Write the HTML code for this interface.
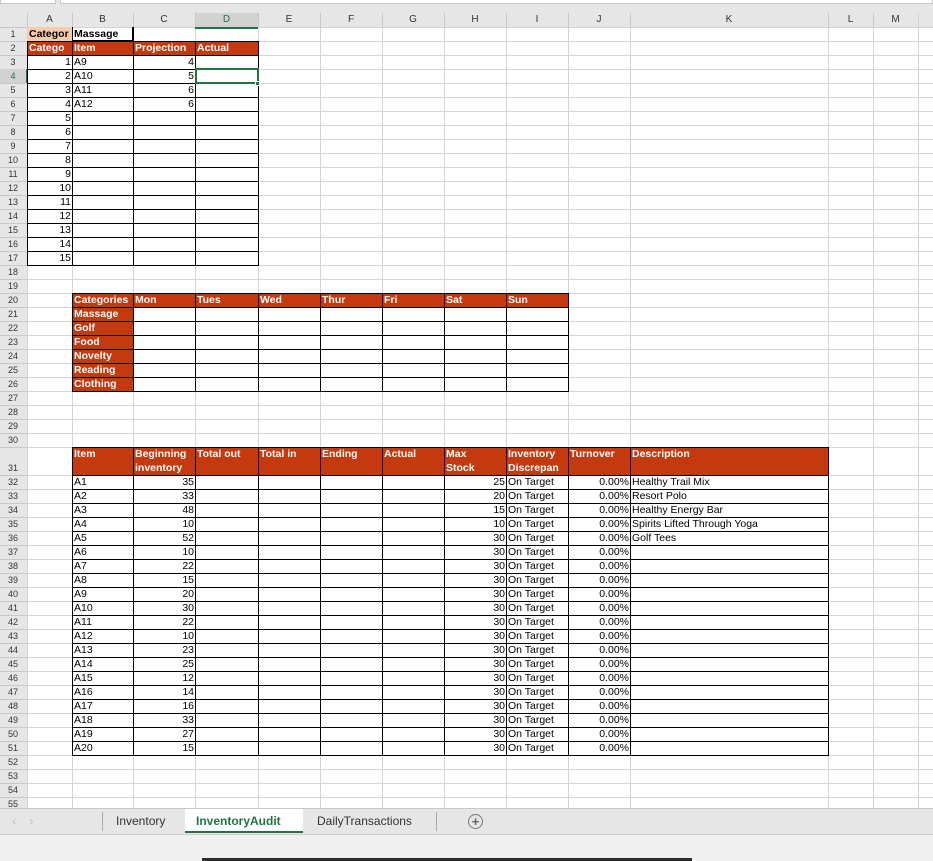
<!DOCTYPE html>
<html><head><meta charset="utf-8"><style>
body{margin:0;width:933px;height:861px;overflow:hidden;background:#fff;font-family:"Liberation Sans",Arial,sans-serif;position:relative}
.a{position:absolute;box-sizing:border-box}
.t{position:absolute;font-size:10.5px;line-height:14px;white-space:nowrap;overflow:hidden;padding:0 2px;box-sizing:border-box;color:#000}
.b{font-weight:bold;color:#fff}
.r{text-align:right}
</style></head><body>
<div class="a" style="left:0;top:0;width:933px;height:27px;background:#e6e6e6"></div>
<div class="a" style="left:0;top:0;width:56px;height:4px;background:#fff;border:1px solid #c8c8c8;border-top:none"></div>
<div class="a" style="left:60px;top:0;width:873px;height:4px;background:#fff;border:1px solid #c8c8c8;border-top:none"></div>
<div id="g"></div>
<script>
var X=[27,72,133,195,258,320,382,444,506,568,630,828,873,918,933];
var L="ABCDEFGHIJKLM";
function rowTop(n){if(n<=31)return 27+14*(n-1);return 475+14*(n-32);}
function rowH(n){return n==31?28:14;}
var h='';
for(var i=0;i<X.length;i++)h+='<div class="a" style="left:'+X[i]+'px;top:13px;width:1px;height:798px;background:#d4d4d4"></div>';
for(var n=1;n<=55;n++){var y=rowTop(n);h+='<div class="a" style="left:0;top:'+y+'px;width:933px;height:1px;background:#d4d4d4"></div>';}
h+='<div class="a" style="left:0;top:27px;width:27px;height:784px;background:#e6e6e6"></div>';
for(var n=1;n<=55;n++){var y=rowTop(n);h+='<div class="a" style="left:0;top:'+y+'px;width:27px;height:1px;background:#c8c8c8"></div>';
h+='<div class="t" style="left:0;top:'+(y+rowH(n)-14)+'px;width:26px;font-size:9px;text-align:center;color:#333;'+(n==4?'color:#217346;background:#d2d2d2;':'')+'">'+n+'</div>';}
h+='<div class="a" style="left:26px;top:69px;width:2px;height:14px;background:#217346"></div>';
for(var i=0;i<13;i++){var sel=i==3;h+='<div class="t" style="left:'+X[i]+'px;top:13px;width:'+(X[i+1]-X[i])+'px;text-align:center;font-size:10px;color:'+(sel?'#217346':'#333')+';'+(sel?'background:#d2d2d2;border-bottom:2px solid #217346;':'')+'">'+L[i]+'</div>';
h+='<div class="a" style="left:'+X[i]+'px;top:13px;width:1px;height:14px;background:#c8c8c8"></div>';}
var RED='#c4390e';
function fill(c,r,bg,c2,r2){c2=c2||c;r2=r2||r;h+='<div class="a" style="left:'+X[c]+'px;top:'+rowTop(r)+'px;width:'+(X[c2+1]-X[c])+'px;height:'+(rowTop(r2)+rowH(r2)-rowTop(r))+'px;background:'+bg+'"></div>';}
function box(c1,r1,c2,r2){for(var c=c1;c<=c2;c++)for(var r=r1;r<=r2;r++){h+='<div class="a" style="left:'+X[c]+'px;top:'+rowTop(r)+'px;width:'+(X[c+1]-X[c]+1)+'px;height:'+(rowH(r)+1)+'px;border:1px solid #000"></div>';}}
function txt(c,r,s,cls,extra){h+='<div class="t '+(cls||'')+'" style="left:'+X[c]+'px;top:'+rowTop(r)+'px;width:'+(X[c+1]-X[c]+1)+'px;'+(extra||'')+'">'+s+'</div>';}
fill(0,1,'#f8cbad');
fill(0,2,RED,3,2);
box(0,2,3,17);
h+='<div class="a" style="left:72px;top:27px;width:62px;height:15px;border:2px solid #000;border-left:1px solid #000;border-top:none"></div>';
txt(0,1,'Categor','', 'font-weight:bold');txt(1,1,'Massage','','font-weight:bold');
['Catego','Item','Projection','Actual'].forEach(function(s,i){txt(i,2,s,'b');});
for(var k=1;k<=15;k++)txt(0,k+2,k,'r');
['A9','A10','A11','A12'].forEach(function(s,i){txt(1,i+3,s);});
[4,5,6,6].forEach(function(s,i){txt(2,i+3,s,'r');});
fill(1,20,RED,8,20);fill(1,21,RED,1,26);
box(1,20,8,26);
['Categories','Mon','Tues','Wed','Thur','Fri','Sat','Sun'].forEach(function(s,i){txt(i+1,20,s,'b');});
['Massage','Golf','Food','Novelty','Reading','Clothing'].forEach(function(s,i){txt(1,21+i,s,'b');});
fill(1,31,RED,10,31);
box(1,31,10,51);
var hd=['Item','Beginning<br>inventory','Total out','Total in','Ending','Actual','Max<br>Stock','Inventory<br>Discrepan','Turnover','Description'];
hd.forEach(function(s,i){txt(i+1,31,s,'b','height:28px;white-space:normal;line-height:14px');});
var C=[35,33,48,10,52,10,22,15,20,30,22,10,23,25,12,14,16,33,27,15];
var D=['Healthy Trail Mix','Resort Polo','Healthy Energy Bar','Spirits Lifted Through Yoga','Golf Tees'];
for(var k=0;k<20;k++){var r=32+k;txt(1,r,'A'+(k+1));txt(2,r,C[k],'r');txt(7,r,k<4?[25,20,15,10][k]:30,'r');txt(8,r,'On Target');txt(9,r,'0.00%','r');if(D[k])txt(10,r,D[k]);}
h+='<div class="a" style="left:195px;top:68px;width:64px;height:16px;border:2px solid #217346"></div>';
h+='<div class="a" style="left:255px;top:81px;width:5px;height:5px;background:#217346;border:1px solid #fff"></div>';
document.getElementById('g').innerHTML=h;
</script>
<div class="a" style="left:0;top:808px;width:933px;height:26px;background:#e6e6e6;border-top:1px solid #c8c8c8"></div>
<div class="a" style="left:0;top:834px;width:933px;height:27px;background:#f0f0f0;border-top:1px solid #d0d0d0"></div>
<div class="a" style="left:202px;top:858px;width:490px;height:3px;background:#2b2b2b"></div>
<div class="t" style="left:10px;top:814px;font-size:12px;color:#bbb">&#8249;&nbsp;&nbsp;&nbsp;&nbsp;&#8250;</div>
<div class="a" style="left:102px;top:812px;width:1px;height:19px;background:#aaa"></div>
<div class="t" style="left:114px;top:814px;font-size:12px;color:#333">Inventory</div>
<div class="a" style="left:185px;top:809px;width:118px;height:24px;background:#fff;border-bottom:2px solid #217346"></div>
<div class="t" style="left:194px;top:814px;font-size:12px;color:#217346;font-weight:bold">InventoryAudit</div>
<div class="t" style="left:315px;top:814px;font-size:12px;color:#333">DailyTransactions</div>
<div class="a" style="left:436px;top:812px;width:1px;height:19px;background:#aaa"></div>
<div class="a" style="left:468px;top:814px;width:15px;height:15px;border:1px solid #777;border-radius:50%;text-align:center;font-size:13px;line-height:13px;color:#666;font-weight:bold">+</div>
</body></html>
